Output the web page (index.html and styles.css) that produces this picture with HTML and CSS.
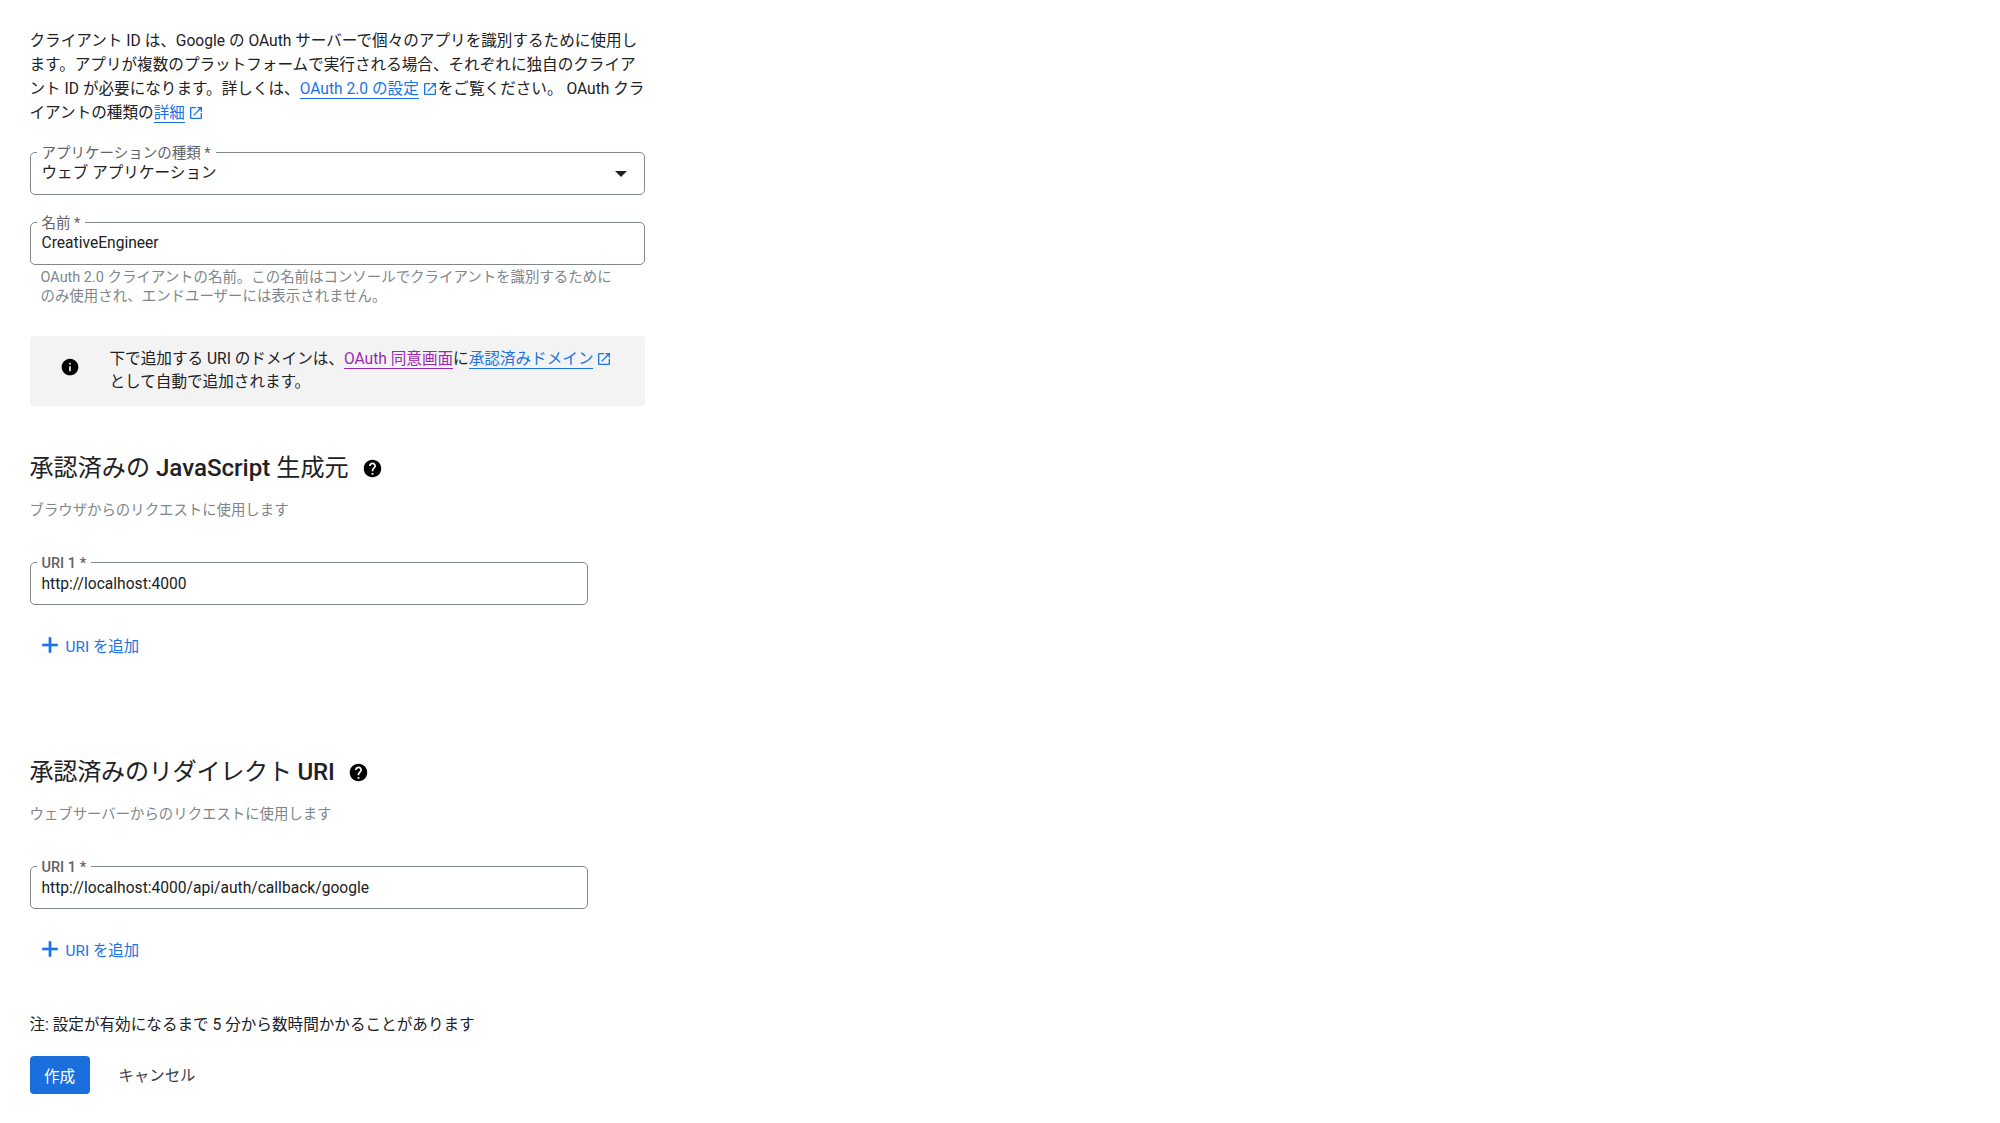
FILE: index.html
```html
<!DOCTYPE html>
<html lang="ja">
<head>
<meta charset="utf-8">
<title>OAuth クライアント ID の作成</title>
<link rel="stylesheet" href="styles.css">
</head>
<body>
<main class="page">
  <p class="intro">クライアント ID は、Google の OAuth サーバーで個々のアプリを識別するために使用します。アプリが複数のプラットフォームで実行される場合、それぞれに独自のクライアント ID が必要になります。詳しくは、<a class="link" href="#">OAuth 2.0 の設定</a><svg class="ext" viewBox="0 0 24 24"><path d="M19 19H5V5h7V3H5c-1.11 0-2 .9-2 2v14c0 1.1.89 2 2 2h14c1.1 0 2-.9 2-2v-7h-2v7zM14 3v2h3.59l-9.83 9.83 1.41 1.41L19 6.41V10h2V3h-7z"/></svg>をご覧ください。 OAuth クライアントの種類の<a class="link" href="#">詳細</a><svg class="ext" viewBox="0 0 24 24"><path d="M19 19H5V5h7V3H5c-1.11 0-2 .9-2 2v14c0 1.1.89 2 2 2h14c1.1 0 2-.9 2-2v-7h-2v7zM14 3v2h3.59l-9.83 9.83 1.41 1.41L19 6.41V10h2V3h-7z"/></svg></p>

  <div class="field field-type">
    <span class="label">アプリケーションの種類 *</span>
    <span class="value">ウェブ アプリケーション</span>
    <span class="caret"></span>
  </div>

  <div class="field field-name">
    <span class="label">名前 *</span>
    <span class="value">CreativeEngineer</span>
  </div>
  <p class="hint">OAuth 2.0 クライアントの名前。この名前はコンソールでクライアントを識別するためにのみ使用され、エンドユーザーには表示されません。</p>

  <div class="notice">
    <svg class="notice-icon" viewBox="0 0 24 24"><path d="M12 2C6.48 2 2 6.48 2 12s4.48 10 10 10 10-4.48 10-10S17.52 2 12 2zm1 15h-2v-6h2v6zm0-8h-2V7h2v2z"/></svg>
    <p class="notice-text">下で追加する URI のドメインは、<a class="link visited" href="#">OAuth 同意画面</a>に<a class="link" href="#">承認済みドメイン</a><svg class="ext" viewBox="0 0 24 24"><path d="M19 19H5V5h7V3H5c-1.11 0-2 .9-2 2v14c0 1.1.89 2 2 2h14c1.1 0 2-.9 2-2v-7h-2v7zM14 3v2h3.59l-9.83 9.83 1.41 1.41L19 6.41V10h2V3h-7z"/></svg>として自動で追加されます。</p>
  </div>

  <section class="section section-origins">
    <h2 class="heading">承認済みの&nbsp;<span class="latin">JavaScript</span>&nbsp;生成元<svg class="help" viewBox="0 0 24 24"><path d="M12 2C6.48 2 2 6.48 2 12s4.48 10 10 10 10-4.48 10-10S17.52 2 12 2zm1 17h-2v-2h2v2zm2.07-7.75l-.9.92C13.45 12.9 13 13.5 13 15h-2v-.5c0-1.1.45-2.1 1.17-2.83l1.24-1.26c.37-.36.59-.86.59-1.41 0-1.1-.9-2-2-2s-2 .9-2 2H8c0-2.21 1.79-4 4-4s4 1.79 4 4c0 .88-.36 1.68-.93 2.25z"/></svg></h2>
    <p class="sub">ブラウザからのリクエストに使用します</p>
    <div class="field field-uri">
      <span class="label">URI 1 *</span>
      <span class="value">http://localhost:4000</span>
    </div>
    <button class="add" type="button"><svg class="add-icon" viewBox="0 0 24 24"><path d="M19 13h-6v6h-2v-6H5v-2h6V5h2v6h6v2z"/></svg>URI を追加</button>
  </section>

  <section class="section section-redirects">
    <h2 class="heading heading-tight">承認済みのリダイレクト&nbsp;<span class="latin">URI</span><svg class="help" viewBox="0 0 24 24"><path d="M12 2C6.48 2 2 6.48 2 12s4.48 10 10 10 10-4.48 10-10S17.52 2 12 2zm1 17h-2v-2h2v2zm2.07-7.75l-.9.92C13.45 12.9 13 13.5 13 15h-2v-.5c0-1.1.45-2.1 1.17-2.83l1.24-1.26c.37-.36.59-.86.59-1.41 0-1.1-.9-2-2-2s-2 .9-2 2H8c0-2.21 1.79-4 4-4s4 1.79 4 4c0 .88-.36 1.68-.93 2.25z"/></svg></h2>
    <p class="sub">ウェブサーバーからのリクエストに使用します</p>
    <div class="field field-uri">
      <span class="label">URI 1 *</span>
      <span class="value">http://localhost:4000/api/auth/callback/google</span>
    </div>
    <button class="add" type="button"><svg class="add-icon" viewBox="0 0 24 24"><path d="M19 13h-6v6h-2v-6H5v-2h6V5h2v6h6v2z"/></svg>URI を追加</button>
  </section>

  <p class="note">注: 設定が有効になるまで 5 分から数時間かかることがあります</p>
  <div class="actions">
    <button class="btn-primary" type="button">作成</button>
    <button class="btn-text" type="button">キャンセル</button>
  </div>
</main>
</body>
</html>
```

FILE: styles.css
```css
* { box-sizing: border-box; }
html, body { margin: 0; height: 100%; background: #fff; }
body {
  overflow: hidden;
  font-family: Roboto, "Noto Sans CJK JP", sans-serif;
  font-size: 15.6px;
  color: #202124;
}
.page { width: 644.5px; padding: 29px 0 0 29.5px; }
p { margin: 0; }
.intro { line-height: 24px; }
.link { color: #1a73e8; text-decoration: none; border-bottom: 1px solid #1a73e8; }
.link.visited { color: #9c27b0; border-bottom-color: #9c27b0; }
.ext { width: 16px; height: 16px; fill: #1a73e8; vertical-align: -3px; margin-left: 3px; }
.field {
  position: relative;
  display: flex;
  align-items: center;
  height: 43px;
  padding: 0 11px;
  border: 1px solid #80868b;
  border-radius: 5px;
}
.field-type { margin-top: 27px; }
.field-name { margin-top: 27px; }
.field-uri { width: 558px; margin-top: 41px; }
.label {
  position: absolute;
  top: -7.5px;
  left: 6px;
  padding: 0 5px;
  background: #fff;
  font-size: 14.5px;
  line-height: 16px;
  color: #5f6368;
}
.field-uri .label { font-weight: 500; }
.value { font-size: 15.6px; line-height: 20px; position: relative; top: -1px; }
.field-uri .value { top: 0; }
.caret {
  margin-left: auto;
  margin-right: 6px;
  width: 0;
  height: 0;
  border-left: 6px solid transparent;
  border-right: 6px solid transparent;
  border-top: 6px solid #202124;
}
.hint {
  padding: 3px 20px 0 11px;
  font-size: 14.45px;
  line-height: 19px;
  color: #80868b;
}
.notice {
  display: flex;
  align-items: center;
  margin-top: 30px;
  height: 70px;
  padding: 0 30px;
  background: #f3f3f3;
  border-radius: 4px;
}
.notice-icon { flex: none; width: 20px; height: 20px; margin: 0 30px 8px 0; fill: #000; }
.notice-text { line-height: 23px; }
.section-origins { margin-top: 45px; }
.section-redirects { margin-top: 96px; }
.heading {
  display: flex;
  align-items: center;
  margin: 0;
  font-size: 24.1px;
  font-weight: 400;
  line-height: 34px;
  color: #202124;
}
.heading-tight { letter-spacing: -0.25px; }
.latin { font-weight: 500; }
.help { width: 21px; height: 21px; margin-left: 13px; fill: #000; }
.sub { margin-top: 16px; font-size: 14.4px; line-height: 20px; color: #80868b; }
.add {
  display: flex;
  align-items: center;
  margin: 26px 0 0;
  padding: 0 0 0 7px;
  height: 28px;
  border: 0;
  background: none;
  font: inherit;
  font-size: 15.4px;
  font-weight: 400;
  color: #1a73e8;
}
.add-icon { width: 26px; height: 26px; margin-right: 3px; fill: #1a73e8; stroke: #1a73e8; stroke-width: 0.5; }
.note { margin-top: 50px; line-height: 24px; }
.actions { display: flex; align-items: center; margin-top: 18.5px; }
.btn-primary {
  width: 60px;
  height: 38px;
  border: 0;
  border-radius: 4px;
  background: #1a6fdc;
  color: #fff;
  font: inherit;
}
.btn-text {
  margin-left: 29px;
  padding: 0 0 2px;
  border: 0;
  background: none;
  color: #3c4043;
  font: inherit;
  font-size: 15.4px;
}
```
